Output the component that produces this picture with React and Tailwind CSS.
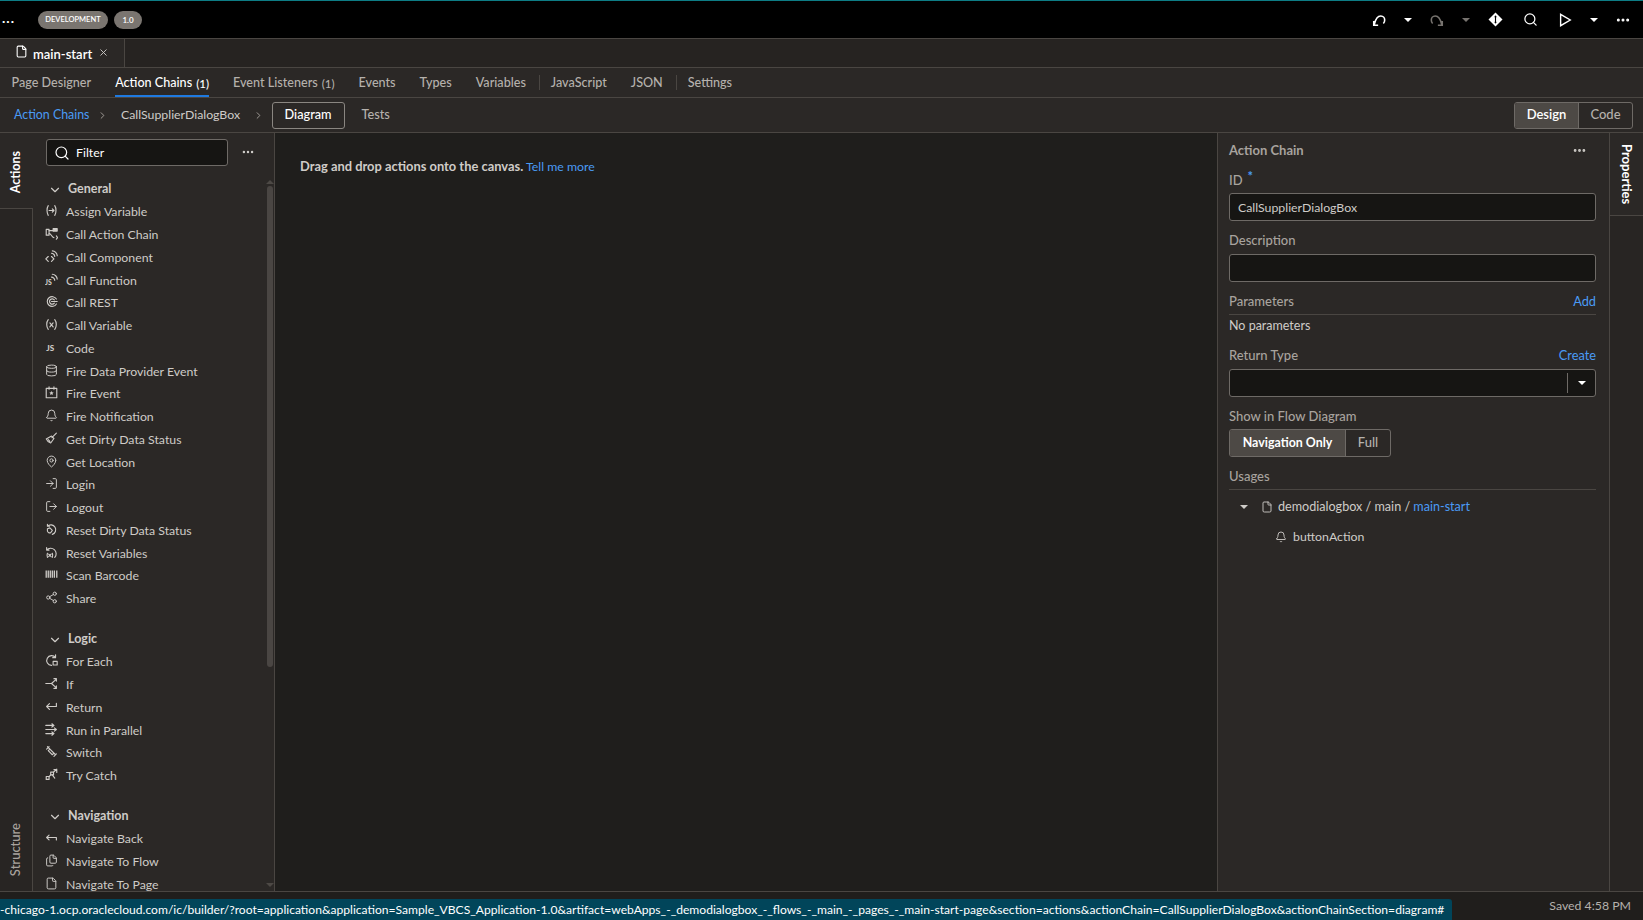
import React from "react";
import {
  Bell,
  ChevronDown,
  ChevronRight,
  Database,
  File,
  Files,
  LogIn,
  LogOut,
  MapPin,
  MoreHorizontal,
  Search,
  Share2,
  X,
} from "lucide-react";

// small stroke icon drawn on a 16 box
const Ico = ({ children, fill = "none" }) => (
  <svg
    viewBox="0 0 16 16"
    width="13"
    height="13"
    fill={fill}
    stroke="currentColor"
    strokeWidth="1.4"
    strokeLinecap="round"
    strokeLinejoin="round"
  >
    {children}
  </svg>
);

const Lu = ({ icon: I }) => <I size={13} strokeWidth={1.8} />;

const Caret = ({ className = "" }) => (
  <span
    className={`inline-block w-0 h-0 border-x-[4px] border-x-transparent border-t-[4px] border-t-current ${className}`}
  />
);

const sections = [
  {
    title: "General",
    items: [
      ["Assign Variable", <Ico><path d="M4 2C2 5 2 11 4 14M12 2c2 3 2 9 0 12M5 8h6M9 6l2 2-2 2" /></Ico>],
      ["Call Action Chain", <Ico><rect x="10" y="2" width="5" height="3" fill="currentColor" /><rect x="1.5" y="3" width="3.500" height="7" /><path d="M5 8c3 0 3 5 6 5M14 11l1.500 2-1.500 2M5 4.500h5" /></Ico>],
      ["Call Component", <Ico><path d="M4 8l-3 3 3 3M8 8l3 3-3 3M8 4c2 0 4 2 4 4M9 1c3 0 6 3 6 6" /></Ico>],
      ["Call Function", <Ico><text x="0" y="15" fontSize="8.500" fontWeight="900" fill="currentColor" stroke="none" fontFamily="Lato, sans-serif">JS</text><path d="M8 5c2 0 4 2 4 4M9 1.500c3 0 6 3 6 6" /></Ico>],
      ["Call REST", <Ico><path d="M14 5A6 6 0 1 0 14 11M11.500 6A3.300 3.300 0 1 0 11.500 10M8 8h7" /></Ico>],
      ["Call Variable", <Ico><path d="M4 2C1.500 5 1.500 11 4 14M12 2c2.500 3 2.500 9 0 12M6 6l4 5M10 6l-4 5" /></Ico>],
      ["Code", <Ico><text x="1.500" y="12" fontSize="10" fontWeight="900" fill="currentColor" stroke="none" fontFamily="Lato, sans-serif">JS</text></Ico>],
      ["Fire Data Provider Event", <Lu icon={Database} />],
      ["Fire Event", <Ico><rect x="1.500" y="3" width="13" height="11.500" /><path d="M5 1v3M11 1v3" /><path d="M8 6l.8 1.800 1.900.2-1.400 1.300.4 1.900L8 10.300l-1.700.900.4-1.900L5.300 8l1.900-.2z" fill="currentColor" stroke="none" /></Ico>],
      ["Fire Notification", <Lu icon={Bell} />],
      ["Get Dirty Data Status", <Ico><path d="M14 1.500L8.500 7M8 5l3 3-4 5.500C5 13 2.500 11 1.500 8.500zM4 9.500l2 2" /></Ico>],
      ["Get Location", <Lu icon={MapPin} />],
      ["Login", <Lu icon={LogIn} />],
      ["Logout", <Lu icon={LogOut} />],
      ["Reset Dirty Data Status", <Ico><path d="M3 4a6 6 0 1 1 6 10M3 1.500V4h2.500M3 7l3-1 3 3-2 3a3 3 0 0 1-4-2z" /></Ico>],
      ["Reset Variables", <Ico><path d="M2 5a6.500 6.500 0 1 1 10 9M2 2v3h3M3 9c-.8 2-.8 3 0 5M9 9c.8 2 .8 3 0 5M4.500 10l3 3M7.500 10l-3 3" /></Ico>],
      ["Scan Barcode", <Ico><path d="M1.500 3v9M4 3v9M6.500 3v9M9 3v9M11.500 3v9M14.500 3v9" strokeWidth="1.600" strokeLinecap="butt" /></Ico>],
      ["Share", <Lu icon={Share2} />],
    ],
  },
  {
    title: "Logic",
    items: [
      ["For Each", <Ico><path d="M13 4.500A6 6 0 1 0 8 14M13 1v3.500H9.500" /><rect x="10" y="9" width="5" height="4.500" /></Ico>],
      ["If", <Ico><path d="M1 8h7l5-4.500M8 8l5 4.500M11 2h3v3M11 14h3v-3" /></Ico>],
      ["Return", <Ico><path d="M14 8H2M5.500 4.500L2 8l3.500 3.500M14 4v4" /></Ico>],
      ["Run in Parallel", <Ico><path d="M1 3h10M8.500 1L11 3 8.500 5M1 8h13M11.500 6l2.500 2-2.500 2M1 13h10M8.500 11l2.500 2-2.500 2" /></Ico>],
      ["Switch", <Ico><path d="M3 2l10 10M5 2L2 5M11 14l3-3M6 5l5 5-2 2-5-5z" /></Ico>],
      ["Try Catch", <Ico><rect x="1.500" y="10.500" width="3.500" height="3.500" /><rect x="7" y="5" width="3.500" height="3.500" /><path d="M5 10.500l2-2M10.500 5L14.500 1.500M11 2h3.500v3.500M9 8.500l3 4" /></Ico>],
    ],
  },
  {
    title: "Navigation",
    items: [
      ["Navigate Back", <Ico><path d="M14 8H2M5 5L2 8l3 3M14 8v3" /></Ico>],
      ["Navigate To Flow", <Lu icon={Files} />],
      ["Navigate To Page", <Lu icon={File} />],
    ],
  },
];

const navTabs = [
  ["Page Designer"],
  ["Action Chains", "(1)", true],
  ["Event Listeners", "(1)"],
  ["Events"],
  ["Types"],
  ["Variables"],
  ["JavaScript", null, false, true],
  ["JSON"],
  ["Settings", null, false, true],
];

const Label = ({ children, className = "" }) => (
  <div className={`h-[18px] flex items-center text-[13px] font-medium text-[#a8a39e] ${className}`}>
    {children}
  </div>
);

const Field = ({ children, className = "" }) => (
  <div className={`h-[28px] rounded-[3px] border border-[#6e6a66] bg-[#161513] flex items-center ${className}`}>
    {children}
  </div>
);

const url =
  "-chicago-1.ocp.oraclecloud.com/ic/builder/?root=application&application=Sample_VBCS_Application-1.0&artifact=webApps_-_demodialogbox_-_flows_-_main_-_pages_-_main-start-page&section=actions&actionChain=CallSupplierDialogBox&actionChainSection=diagram#";

export default function App() {
  return (
    <div className="w-[1643px] h-[920px] overflow-hidden flex flex-col bg-[#2b2826] text-[12.300px] text-[#cfccc8] font-['Lato',sans-serif]">
      {/* top bar */}
      <div className="h-[38px] shrink-0 bg-black border-t-[1.5px] border-[#0d7c85] flex items-center text-white">
        <span className="w-[38px] pl-[2px] text-[14px] font-bold tracking-[1px] -mt-1">...</span>
        <span className="h-[18px] w-[70px] rounded-full bg-[#7a7570] text-[7.500px] font-semibold flex items-center justify-center">
          DEVELOPMENT
        </span>
        <span className="ml-[6px] h-[18px] w-[28px] rounded-full bg-[#7a7570] text-[8px] font-semibold flex items-center justify-center">
          1.0
        </span>
        <div className="ml-auto flex items-center pr-[12px]">
          <svg viewBox="0 0 16 16" width="14" height="14" fill="none" stroke="currentColor" strokeWidth="1.800" className="mr-[18px]">
            <path d="M2 9v5h5M2.500 13.500C4 7 7 3.500 10 3.500c3 0 4.500 2.500 4.500 4.500 0 1.500-.5 3-1.500 4" />
          </svg>
          <Caret className="mr-[18px] text-white" />
          <svg viewBox="0 0 16 16" width="14" height="14" fill="none" stroke="#77736f" strokeWidth="1.800" className="mr-[18px]">
            <path d="M14 9v5H9M13.500 13.500C12 7 9 3.500 6 3.500c-3 0-4.500 2.500-4.500 4.500 0 1.500.5 3 1.500 4" />
          </svg>
          <Caret className="mr-[18px] text-[#77736f]" />
          <svg viewBox="0 0 16 16" width="15" height="15" className="mr-[20px]">
            <path d="M8 0.500L15.500 8 8 15.500 0.500 8z" fill="white" />
            <path d="M8 4v8" stroke="black" strokeWidth="1.200" />
            <circle cx="8" cy="5" r="1" fill="black" />
            <circle cx="8" cy="11" r="1" fill="black" />
          </svg>
          <Search size={15} strokeWidth={2} className="mr-[20px]" />
          <svg viewBox="0 0 16 16" width="14" height="14" fill="none" stroke="white" strokeWidth="1.600" className="mr-[18px]">
            <path d="M3 1.500L14 8 3 14.500z" />
          </svg>
          <Caret className="mr-[17px] text-white" />
          <MoreHorizontal size={16} strokeWidth={2.500} />
        </div>
      </div>

      {/* file tabs */}
      <div className="h-[30px] shrink-0 border-y border-[#4a4642] bg-[#262321] flex">
        <div className="w-[125px] border-r border-[#4a4642] bg-[#2b2826] flex items-center pl-[15px] text-white">
          <File size={13} strokeWidth={2} className="-mt-1" />
          <span className="ml-[5px] mt-[3px] font-semibold text-[13px]">main-start</span>
          <X size={11} strokeWidth={2} className="ml-[6px] -mt-px text-[#cfccc8]" />
        </div>
      </div>

      {/* section tabs */}
      <div className="h-[30px] shrink-0 border-b border-[#4a4642] flex items-stretch pl-[11.500px] text-[12.600px]">
        {navTabs.map(([name, count, active, divider]) => (
          <React.Fragment key={name}>
            {divider && <div className="w-px h-[15px] self-center -ml-[11px] mr-[11px] bg-[#4a4642]" />}
            <div
              className={`mr-[24px] pt-[2px] flex items-center font-medium border-y-2 border-t-transparent ${
                active ? "border-b-[#1f7ae0] text-white" : "border-b-transparent text-[#b5b1ac]"
              }`}
            >
              {name}
              {count && <span className="ml-1 text-[11.500px]">{count}</span>}
            </div>
          </React.Fragment>
        ))}
      </div>

      {/* breadcrumb row */}
      <div className="h-[35px] shrink-0 border-b border-[#4a4642] flex items-center pl-[14px] pr-[10px]">
        <span className="text-[#4a9bf5] text-[12.400px]">Action Chains</span>
        <ChevronRight size={11} className="ml-[7.500px] text-[#a8a39e]" />
        <span className="ml-[13px]">CallSupplierDialogBox</span>
        <ChevronRight size={11} className="ml-[12.500px] text-[#a8a39e]" />
        <span className="ml-[8px] w-[73px] h-[27px] border border-[#8a8681] rounded-[3px] flex items-center justify-center font-medium text-white text-[12.700px]">
          Diagram
        </span>
        <span className="ml-[17px] font-medium text-[#b5b1ac] text-[12.700px]">Tests</span>
        <div className="ml-auto h-[27px] flex rounded-[3px] border border-[#6e6a66] overflow-hidden text-[13px]">
          <span className="w-[64px] bg-[#4d4945] border-r border-[#6e6a66] flex items-center justify-center font-semibold text-white">
            Design
          </span>
          <span className="w-[53px] flex items-center justify-center font-medium text-[#b5b1ac]">Code</span>
        </div>
      </div>

      {/* main */}
      <div className="flex-1 min-h-0 flex">
        {/* left rail */}
        <div className="w-[33px] shrink-0 flex flex-col">
          <div className="h-[75px] shrink-0 flex justify-center pt-[18px]">
            <span className="[writing-mode:vertical-rl] rotate-180 font-bold text-[12.500px] text-white h-fit">Actions</span>
          </div>
          <div className="flex-1 border-t border-r border-[#4a4642] bg-[#282523] flex flex-col justify-end items-center pb-[15px]">
            <span className="[writing-mode:vertical-rl] rotate-180 font-medium text-[13px] text-[#a8a39e]">Structure</span>
          </div>
        </div>

        {/* actions palette */}
        <div className="w-[242px] shrink-0 border-r border-[#4a4642] flex flex-col min-h-0">
          <div className="h-[45px] shrink-0 flex items-start pt-[6px] pl-[13px]">
            <div className="w-[182px] h-[27px] rounded-[3px] border border-[#6e6a66] bg-[#161513] flex items-center pl-[7px] text-white">
              <Search size={16} strokeWidth={1.800} />
              <span className="ml-[6px] mt-px">Filter</span>
            </div>
            <MoreHorizontal size={14} strokeWidth={2.200} className="ml-[13px] mt-[6px] text-[#cfccc8]" />
          </div>
          <div className="flex-1 min-h-0 flex">
            <div className="flex-1 min-w-0 overflow-hidden pl-[13px] pt-0">
              {sections.map((s) => (
                <div key={s.title} className="mb-[17.500px]">
                  <div className="h-[23px] flex items-center font-bold text-[12.500px] text-[#cfccc8]">
                    <ChevronDown size={14} strokeWidth={2} className="ml-[2px] mr-[6px]" />
                    {s.title}
                  </div>
                  {s.items.map(([name, icon]) => (
                    <div key={name} className="h-[22.750px] leading-[14px] flex items-center whitespace-nowrap">
                      <span className="w-[21px] -ml-px -mt-[3px] flex text-[#cfccc8]">{icon}</span>
                      {name}
                    </div>
                  ))}
                </div>
              ))}
            </div>
            <div className="w-[7px] mr-px shrink-0 flex flex-col items-center pt-[2px]">
              <Caret className="rotate-180 text-[#4d4945]" />
              <div className="mt-[2px] w-[6px] h-[481px] rounded-[3px] bg-[#4a4643]" />
              <Caret className="mt-auto mb-[4px] text-[#4d4945]" />
            </div>
          </div>
        </div>

        {/* canvas */}
        <div className="w-[942px] shrink-0 bg-[#1f1e1c] pl-[25px] pt-[24px]">
          <span className="font-bold text-[12.900px] text-[#cfccc8]">Drag and drop actions onto the canvas.</span>{" "}
          <span className="text-[#4a9bf5]">Tell me more</span>
        </div>

        {/* properties */}
        <div className="w-[393px] shrink-0 border-x border-[#4a4642] pl-[11px] pr-[13px]">
          <div className="h-[35px] flex items-center justify-between font-bold text-[13px] text-[#a8a39e]">
            Action Chain
            <MoreHorizontal size={15} strokeWidth={2.500} className="mr-[9px] text-[#cfccc8]" />
          </div>
          <Label className="mt-[4px]">
            ID<span className="ml-[5px] -mt-2 text-[#4a9bf5] text-[13px] font-bold">*</span>
          </Label>
          <Field className="mt-[3px] px-[8px] pt-[2px] text-[#cfccc8]">CallSupplierDialogBox</Field>
          <Label className="mt-[11px]">Description</Label>
          <Field className="mt-[4px]" />
          <div className="mt-[11px] h-[22px] pb-[3px] border-b border-[#4a4642] flex items-center justify-between">
            <span className="font-medium text-[13px] text-[#a8a39e]">Parameters</span>
            <span className="text-[#4a9bf5] text-[12.800px]">Add</span>
          </div>
          <div className="mt-[2px] h-[18px] flex items-center text-[12.500px]">No parameters</div>
          <div className="mt-[12px] h-[18px] flex items-center justify-between">
            <span className="font-medium text-[13px] text-[#a8a39e]">Return Type</span>
            <span className="text-[#4a9bf5] text-[12.800px]">Create</span>
          </div>
          <Field className="mt-[4px] justify-end">
            <span className="h-[20px] w-px bg-[#6e6a66]" />
            <span className="w-[27px] flex justify-center text-white">
              <Caret />
            </span>
          </Field>
          <Label className="mt-[11px]">Show in Flow Diagram</Label>
          <div className="mt-[3px] w-[162px] h-[28px] flex rounded-[3px] border border-[#6e6a66] overflow-hidden">
            <span className="w-[116px] bg-[#4d4945] border-r border-[#6e6a66] flex items-center justify-center font-bold text-[12.400px] text-white">
              Navigation Only
            </span>
            <span className="flex-1 flex items-center justify-center font-medium text-[13px] text-[#b5b1ac]">Full</span>
          </div>
          <div className="mt-[11px] h-[22px] pb-[3px] border-b border-[#4a4642] flex items-center font-medium text-[13px] text-[#a8a39e]">
            Usages
          </div>
          <div className="mt-[8px] h-[18px] flex items-center pl-[11px] text-[12.600px]">
            <Caret className="text-[#cfccc8]" />
            <File size={12} strokeWidth={1.800} className="ml-[13px]" />
            <span className="ml-[5px]">
              demodialogbox / main / <span className="text-[#4a9bf5]">main-start</span>
            </span>
          </div>
          <div className="mt-[12px] h-[18px] flex items-center pl-[46px]">
            <Bell size={12} strokeWidth={1.800} />
            <span className="ml-[6px]">buttonAction</span>
          </div>
        </div>

        {/* right rail */}
        <div className="flex-1 flex flex-col">
          <div className="h-[82px] shrink-0 flex justify-center pt-[11px]">
            <span className="[writing-mode:vertical-rl] font-bold text-[13px] text-white h-fit">Properties</span>
          </div>
          <div className="flex-1 border-t border-[#4a4642] bg-[#282523]" />
        </div>
      </div>

      {/* status bar */}
      <div className="h-[29px] shrink-0 border-t border-[#4a4642] bg-[#201e1c] flex items-end">
        <div className="w-[1452px] h-[21px] pt-px bg-[#01455a] rounded-tr-[3px] overflow-hidden flex items-center whitespace-nowrap text-white text-[12.100px]">
          {url}
        </div>
        <span className="ml-auto mr-[12px] self-center mt-px text-[#b5b1ac] text-[12.300px]">Saved 4:58 PM</span>
      </div>
    </div>
  );
}
